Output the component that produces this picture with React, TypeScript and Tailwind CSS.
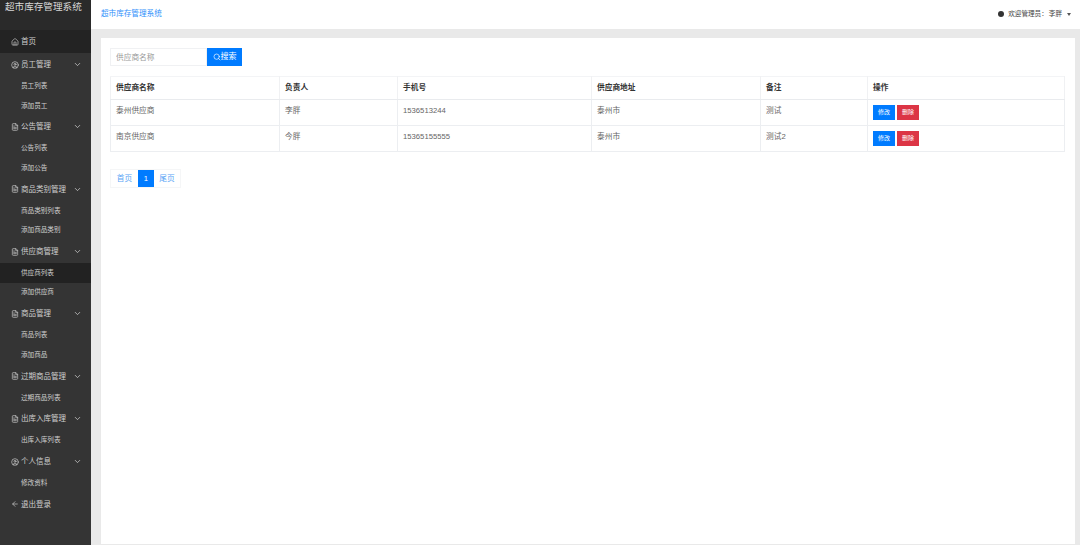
import React from 'react';
import { ArrowLeft, ChevronDown, CircleUser, FileText, Home, Search } from 'lucide-react';

const menu = [
  { title: '员工管理', icon: 'user', items: ['员工列表', '添加员工'] },
  { title: '公告管理', icon: 'file', items: ['公告列表', '添加公告'] },
  { title: '商品类别管理', icon: 'file', items: ['商品类别列表', '添加商品类别'] },
  { title: '供应商管理', icon: 'file', items: ['供应商列表', '添加供应商'] },
  { title: '商品管理', icon: 'file', items: ['商品列表', '添加商品'] },
  { title: '过期商品管理', icon: 'file', items: ['过期商品列表'] },
  { title: '出库入库管理', icon: 'file', items: ['出库入库列表'] },
  { title: '个人信息', icon: 'user', items: ['修改资料'] },
];

const rows = [
  { name: '泰州供应商', owner: '李胖', phone: '1536513244', address: '泰州市', note: '测试' },
  { name: '南京供应商', owner: '今胖', phone: '15365155555', address: '泰州市', note: '测试2' },
];

const Sidebar = () => (
  <aside className="w-[91px] shrink-0 bg-[#343434] text-[#cfcfcf]">
    <div className="h-[30px] bg-[#2a2a2a] pl-[5px] pt-px text-[9.6px] leading-[11px] text-[#d8d8d8]">超市库存管理系统</div>
    <div className="flex h-[23px] items-center gap-[2px] bg-[#232323] pl-[11px] text-[7.5px]">
      <Home size={8} />
      <span>首页</span>
    </div>
    {menu.map((group) => (
      <div key={group.title}>
        <div className="flex h-[23.3px] items-center gap-[2px] pl-[11px] pr-[9px] text-[7.5px]">
          {group.icon === 'user' ? <CircleUser size={8} /> : <FileText size={8} />}
          <span>{group.title}</span>
          <ChevronDown size={9} className="ml-auto" />
        </div>
        {group.items.map((item) => (
          <div
            key={item}
            className={`flex h-[19.5px] items-center pl-[21px] text-[6.6px] ${item === '供应商列表' ? 'bg-[#222222]' : ''}`}
          >
            {item}
          </div>
        ))}
      </div>
    ))}
    <div className="flex h-[23px] items-center gap-[2px] pl-[11px] text-[7.5px]">
      <ArrowLeft size={8} />
      <span>退出登录</span>
    </div>
  </aside>
);

const TopBar = () => (
  <header className="flex h-[29px] shrink-0 items-start justify-between bg-white pl-[10px] pr-[9px]">
    <a className="mt-[9px] text-[7.6px] leading-[9px] text-[#2f8ffb]">超市库存管理系统</a>
    <div className="mt-[10px] flex items-center text-[6.6px] leading-[8px] text-[#444444]">
      <span className="mr-[4px] h-[6px] w-[6px] rounded-full bg-[#333333]" />
      <span>欢迎管理员：</span>
      <span className="ml-[1px]">李胖</span>
      <span className="ml-[5px] h-0 w-0 border-x-[2.5px] border-t-[3px] border-x-transparent border-t-[#555555]" />
    </div>
  </header>
);

const SupplierTable = () => (
  <table className="mt-[10px] w-[955px] table-fixed border-collapse text-[7.7px] text-[#666666]">
    <colgroup>
      <col className="w-[169px]" />
      <col className="w-[118px]" />
      <col className="w-[194px]" />
      <col className="w-[169px]" />
      <col className="w-[107px]" />
      <col />
    </colgroup>
    <thead>
      <tr className="h-[23px] text-[#333333]">
        {['供应商名称', '负责人', '手机号', '供应商地址', '备注', '操作'].map((h, i) => (
          <th
            key={h}
            className={`border border-b-[#e9ebee] border-t-[#f3f4f6] pl-[5px] text-left font-bold ${i > 2 ? 'border-l-[#e2e5ea]' : 'border-l-[#f0f1f3]'} border-r-[#f0f1f3]`}
          >
            {h}
          </th>
        ))}
      </tr>
    </thead>
    <tbody>
      {rows.map((row) => (
        <tr key={row.name} className="h-[26px]">
          <td className="border border-[#eceef1] pb-[3px] pl-[5px]">{row.name}</td>
          <td className="border border-[#eceef1] pb-[3px] pl-[5px]">{row.owner}</td>
          <td className="border border-[#eceef1] pb-[3px] pl-[5px]">{row.phone}</td>
          <td className="border border-[#eceef1] border-l-[#e2e5ea] pb-[3px] pl-[5px]">{row.address}</td>
          <td className="border border-[#eceef1] border-l-[#e2e5ea] pb-[3px] pl-[5px]">{row.note}</td>
          <td className="border border-[#eceef1] border-l-[#e2e5ea] pl-[5px]">
            <div className="flex gap-[2px]">
              <button className="h-[15px] w-[22px] bg-[#007bff] text-[6px] text-white">修改</button>
              <button className="h-[15px] w-[22px] bg-[#dc3545] text-[6px] text-white">删除</button>
            </div>
          </td>
        </tr>
      ))}
    </tbody>
  </table>
);

export default function App() {
  return (
    <div className="flex h-[545px] w-[1080px] overflow-hidden bg-[#e9e9e9] font-['Liberation_Sans','Noto_Sans_CJK_SC',sans-serif]">
      <Sidebar />
      <main className="flex min-w-0 flex-1 flex-col">
        <TopBar />
        <section className="mb-px ml-[10px] mr-[5px] mt-[9px] flex-1 bg-white pl-[9px] pt-[10px]">
          <div className="flex h-[18px]">
            <input
              placeholder="供应商名称"
              className="h-full w-[97px] border border-[#f0f1f3] px-[5px] text-[7.7px] outline-none placeholder:text-[#999999]"
            />
            <button className="flex h-full w-[35px] items-center justify-center bg-[#007bff] text-[8px] text-white">
              <Search size={8} />
              搜索
            </button>
          </div>
          <SupplierTable />
          <div className="mt-[17px] flex h-[19px] w-[71px] items-stretch border border-[#f5f6f7] text-[7.7px] text-[#5aa5f5]">
            <span className="flex w-[27px] items-center justify-center">首页</span>
            <span className="flex w-[16px] items-center justify-center bg-[#007bff] text-white">1</span>
            <span className="flex flex-1 items-center justify-center">尾页</span>
          </div>
        </section>
      </main>
    </div>
  );
}
